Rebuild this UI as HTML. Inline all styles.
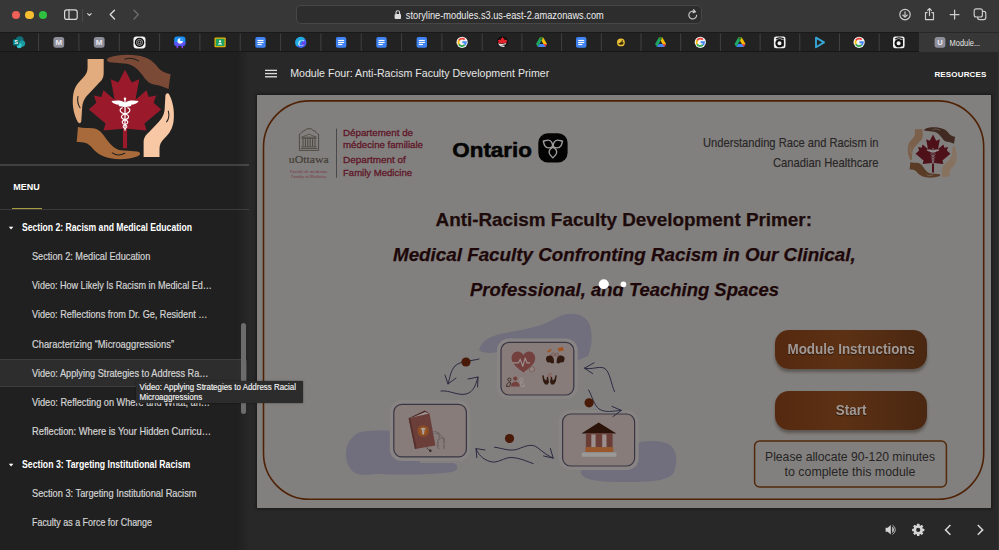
<!DOCTYPE html>
<html lang="en">
<head>
<meta charset="utf-8">
<title>Module Four: Anti-Racism Faculty Development Primer</title>
<style>
*{box-sizing:border-box;margin:0;padding:0}
html,body{width:999px;height:550px;overflow:hidden;background:#282828;font-family:"Liberation Sans",sans-serif;}
.abs{position:absolute}
#toolbar{left:0;top:0;width:999px;height:32px;background:#373737}
#tabbar{left:0;top:32px;width:999px;height:20px;background:#222222;border-top:1px solid #1a1a1a;border-bottom:1px solid #161616}
.tl{width:8.6px;height:8.6px;border-radius:50%;top:10.7px}
#urlbar{left:296px;top:4.8px;width:406px;height:19px;border-radius:5px;background:#2d2d2d;border:1px solid #474747}
#sidebar{left:0;top:52px;width:249px;height:498px;background:#202020;overflow:hidden}
#main{left:249px;top:52px;width:750px;height:498px;background:#282828}
#slide{left:257px;top:95px;width:734px;height:412.5px;background:#82807e;box-shadow:0 0 3px 1px rgba(0,0,0,.4);overflow:hidden}
.btn{left:518px;width:152px;height:38.5px;border-radius:14px;background:linear-gradient(90deg,#55290f 0%,#5c3114 45%,#4a2711 100%);box-shadow:0 2.5px 3px rgba(40,30,25,.42);color:#a09996;text-shadow:0 1px 1px rgba(0,0,0,.5);font-weight:bold;font-size:15px;text-align:center;line-height:38px}
</style>
</head>
<body>
<!-- ===== Safari chrome ===== -->
<div id="toolbar" class="abs">
  <div class="abs tl" style="left:11.9px;background:#ee5f57"></div>
  <div class="abs tl" style="left:25.4px;background:#f5bd2f"></div>
  <div class="abs tl" style="left:38.7px;background:#2fc140"></div>
  <svg class="abs" style="left:60px;top:6px" width="90" height="20" viewBox="0 0 90 20" fill="none" stroke="#d9d9d9" stroke-width="1.2" stroke-linecap="round" stroke-linejoin="round">
    <rect x="4.6" y="3.8" width="12.6" height="9.6" rx="2.2"/><line x1="9" y1="4" x2="9" y2="13.2"/>
    <path d="M27.6 7.6l1.8 1.8 1.8-1.8" stroke-width="1.1"/>
    <path d="M54.5 4.2l-4.3 4.4 4.3 4.4" stroke-width="1.4"/>
    <path d="M74 4.2l4.3 4.4-4.3 4.4" stroke="#6b6b6b" stroke-width="1.4"/>
  </svg>
  <div class="abs" style="left:82px;top:8.5px;width:1px;height:13px;background:#484848"></div>
  <div id="urlbar" class="abs"></div>
  <svg class="abs" style="left:393.2px;top:8.6px" width="10" height="12" viewBox="0 0 10 12"><rect x="1.6" y="5" width="6.4" height="5" rx="1" fill="#dcdcdc"/><path d="M3 5.2V3.6a1.8 1.8 0 013.6 0v1.6" fill="none" stroke="#dcdcdc" stroke-width="1.1"/></svg>
  <svg class="abs" style="left:400px;top:6px" width="210" height="20" viewBox="400 6 210 20"><text x="405.8" y="18.5" font-family="Liberation Sans, sans-serif" font-size="10.2" fill="#ececec" textLength="198" lengthAdjust="spacingAndGlyphs">storyline-modules.s3.us-east-2.amazonaws.com</text></svg>
  <svg class="abs" style="left:686px;top:8px" width="14" height="14" viewBox="0 0 14 14" fill="none" stroke="#cfcfcf" stroke-width="1.1" stroke-linecap="round"><path d="M10.6 7.2a3.9 3.9 0 11-1.6-3.3"/><path d="M7.6 1.6l1.8 2.2-2.4.9" stroke-linejoin="round"/></svg>
  <svg class="abs" style="left:895px;top:5px" width="100" height="20" viewBox="0 0 100 20" fill="none" stroke="#cdcdcd" stroke-width="1.15" stroke-linecap="round" stroke-linejoin="round">
    <circle cx="10" cy="9.6" r="5.2"/><path d="M10 6.8v5.2M7.8 10l2.2 2.2 2.2-2.2"/>
    <path d="M32.2 7.6h-1.7v7h8v-7h-1.7M34.5 10.6V3.6M32.6 5.4l1.9-1.9 1.9 1.9"/>
    <path d="M59.6 5.200v8.800M55.200 9.600h8.800" stroke-width="1.250"/>
    <rect x="79.200" y="3.800" width="8.200" height="8.200" rx="2"/><path d="M82.600 12v.6a2 2 0 002 2h4.200a2 2 0 002-2v-4.200a2 2 0 00-2-2h-1.200"/>
  </svg>
</div>
<div id="tabbar" class="abs"></div>
<div id="tabs"><svg class="abs" style="left:0;top:0" width="999" height="52" viewBox="0 0 999 52">
<rect x="918.9" y="32.5" width="80.4" height="19.5" fill="#373737"/>
<rect x="38.1" y="33.5" width="1" height="17.5" fill="#414141"/><rect x="78.4" y="33.5" width="1" height="17.5" fill="#414141"/><rect x="118.8" y="33.5" width="1" height="17.5" fill="#414141"/><rect x="159.1" y="33.5" width="1" height="17.5" fill="#414141"/><rect x="199.4" y="33.5" width="1" height="17.5" fill="#414141"/><rect x="239.7" y="33.5" width="1" height="17.5" fill="#414141"/><rect x="280.1" y="33.5" width="1" height="17.5" fill="#414141"/><rect x="320.4" y="33.5" width="1" height="17.5" fill="#414141"/><rect x="360.7" y="33.5" width="1" height="17.5" fill="#414141"/><rect x="401.1" y="33.5" width="1" height="17.5" fill="#414141"/><rect x="441.4" y="33.5" width="1" height="17.5" fill="#414141"/><rect x="481.7" y="33.5" width="1" height="17.5" fill="#414141"/><rect x="521.4" y="33.5" width="1" height="17.5" fill="#414141"/><rect x="561.1" y="33.5" width="1" height="17.5" fill="#414141"/><rect x="600.8" y="33.5" width="1" height="17.5" fill="#414141"/><rect x="640.5" y="33.5" width="1" height="17.5" fill="#414141"/><rect x="680.2" y="33.5" width="1" height="17.5" fill="#414141"/><rect x="719.9" y="33.5" width="1" height="17.5" fill="#414141"/><rect x="759.6" y="33.5" width="1" height="17.5" fill="#414141"/><rect x="799.3" y="33.5" width="1" height="17.5" fill="#414141"/><rect x="839.0" y="33.5" width="1" height="17.5" fill="#414141"/><rect x="878.7" y="33.5" width="1" height="17.5" fill="#414141"/>
<circle cx="19.7" cy="40.2" r="3.9" fill="#10707a"/><circle cx="22.1" cy="43.6" r="3.1" fill="#1a9ba1"/><circle cx="19.3" cy="45.8" r="2.5" fill="#37c6d0"/><rect x="12.9" y="39.2" width="6.2" height="6.2" rx="1" fill="#03787c"/><text x="16.0" y="44.4" font-family="Liberation Sans, sans-serif" font-size="5.6" font-weight="bold" fill="#fff" text-anchor="middle">S</text>
<rect x="53.4" y="36.9" width="10.8" height="10.8" rx="2.6" fill="#8e8e9a"/><text x="58.8" y="45.4" font-family="Liberation Sans, sans-serif" font-size="8" font-weight="bold" fill="#e9e9ee" text-anchor="middle">M</text>
<rect x="93.8" y="36.9" width="10.8" height="10.8" rx="2.6" fill="#8e8e9a"/><text x="99.2" y="45.4" font-family="Liberation Sans, sans-serif" font-size="8" font-weight="bold" fill="#e9e9ee" text-anchor="middle">M</text>
<rect x="133.5" y="36.4" width="12" height="12" rx="2.8" fill="#f4f4f4"/><circle cx="139.5" cy="42.4" r="4.7" fill="#0c0c0c"/><circle cx="139.5" cy="42.4" r="3" fill="none" stroke="#d8d8d8" stroke-width=".7"/><circle cx="139.5" cy="42.4" r="1.4" fill="none" stroke="#d8d8d8" stroke-width=".7"/>
<path d="M176.8 44l-.4 4.6 2.2-1.4zM182.8 44l.4 4.6-2.2-1.4z" fill="#8a3ff0"/><rect x="174.20000000000002" y="36.6" width="11.2" height="9.2" rx="2.6" fill="#1a8df2"/><path d="M174.20000000000002 42h11.2v1.2a2.6 2.6 0 01-2.6 2.6h-6a2.6 2.6 0 01-2.6-2.6z" fill="#5b4ff5"/><circle cx="180.20000000000002" cy="41" r="2.7" fill="#f4f7ff"/><path d="M180.20000000000002 41v-2.7a2.7 2.7 0 012.7 2.7z" fill="#1a8df2"/>
<rect x="214.5" y="37.6" width="11.2" height="9.6" rx="1" fill="#f4b400"/><rect x="215.7" y="38.7" width="8.8" height="7.4" fill="#1ea362"/><circle cx="220.1" cy="41.4" r="1.1" fill="#fff"/><path d="M217.9 44.6a2.2 1.6 0 014.4 0z" fill="#fff"/>
<g transform="translate(255.3,37.1)"><rect x="0" y="0" width="10.4" height="10.6" rx="1.8" fill="#3f83f3"/><rect x="2.2" y="2.8" width="6" height="1.15" fill="#fff"/><rect x="2.2" y="4.8" width="6" height="1.15" fill="#fff"/><rect x="2.2" y="6.8" width="4.2" height="1.15" fill="#fff"/></g>
<circle cx="300.8" cy="42.4" r="5.6" fill="#3b6cf0"/><path d="M295.2 42.4a5.6 5.6 0 015.6-5.6 5.6 5.6 0 014 1.7L296.8 46.4a5.6 5.6 0 01-1.6-4z" fill="#19c1d8" opacity=".75"/><path d="M301.8 46.2a5.6 5.6 0 004-3.8l-3 -1z" fill="#7d2ae8" opacity=".8"/><text x="300.8" y="45.6" font-family="Liberation Serif, serif" font-size="9" font-style="italic" fill="#fff" text-anchor="middle">C</text>
<g transform="translate(335.90000000000003,37.1)"><rect x="0" y="0" width="10.4" height="10.6" rx="1.8" fill="#3f83f3"/><rect x="2.2" y="2.8" width="6" height="1.15" fill="#fff"/><rect x="2.2" y="4.8" width="6" height="1.15" fill="#fff"/><rect x="2.2" y="6.8" width="4.2" height="1.15" fill="#fff"/></g>
<g transform="translate(376.3,37.1)"><rect x="0" y="0" width="10.4" height="10.6" rx="1.8" fill="#3f83f3"/><rect x="2.2" y="2.8" width="6" height="1.15" fill="#fff"/><rect x="2.2" y="4.8" width="6" height="1.15" fill="#fff"/><rect x="2.2" y="6.8" width="4.2" height="1.15" fill="#fff"/></g>
<g transform="translate(416.6,37.1)"><rect x="0" y="0" width="10.4" height="10.6" rx="1.8" fill="#3f83f3"/><rect x="2.2" y="2.8" width="6" height="1.15" fill="#fff"/><rect x="2.2" y="4.8" width="6" height="1.15" fill="#fff"/><rect x="2.2" y="6.8" width="4.2" height="1.15" fill="#fff"/></g>
<g transform="translate(462.1,42.3)" fill="none" stroke-width="1.9"><circle r="5.6" fill="#f4f4f4" stroke="none"/><path d="M2.6 -2.6A3.7 3.7 0 00-3.2 -1.85" stroke="#ea4335"/><path d="M-3.2 -1.85A3.7 3.7 0 00-3.2 1.85" stroke="#fbbc05"/><path d="M-3.2 1.85A3.7 3.7 0 002.6 2.6" stroke="#34a853"/><path d="M2.6 2.6A3.7 3.7 0 003.7 0H0.3" stroke="#4285f4"/></g>
<circle cx="502.5" cy="41.700" r="5.200" fill="#070707"/><path d="M502.5 36.800l.9 1.700 1-.5-.3 2.200 1.300-1 .3.900 1.500-.2-.7 1.600.6.500-1.600 1.500h-6l-1.600-1.500.6-.5-.7-1.600 1.500.2.300-.9 1.300 1-.3-2.200 1 .5z" fill="#e0222a"/><path d="M497.9 43.200c2.400 1 5.400 1 8.400-.2l-.6 1.600c-2.400.6-4.600.6-6.400.2l5.600 1-.6 1.200c-2.800.2-5-1-6.400-3.800z" fill="#e2e2e2"/>
<g transform="translate(536.0,37.6)"><path d="M3.7 0h3.6l3.7 6.3H7.4z" fill="#fbbc05"/><path d="M3.7 0L0 6.3l1.8 3.1L5.5 3.1z" fill="#1fa463"/><path d="M1.8 9.4h7.4l1.8-3.1H3.6z" fill="#4285f4"/><path d="M7.3 0H3.7l1.8 3.1z" fill="#188038"/><path d="M11 6.3H7.4l1.8 3.1z" fill="#ea4335"/></g>
<g transform="translate(576.0,37.1)"><rect x="0" y="0" width="10.4" height="10.6" rx="1.8" fill="#3f83f3"/><rect x="2.2" y="2.8" width="6" height="1.15" fill="#fff"/><rect x="2.2" y="4.8" width="6" height="1.15" fill="#fff"/><rect x="2.2" y="6.8" width="4.2" height="1.15" fill="#fff"/></g>
<circle cx="620.9" cy="42.4" r="3.9" fill="#e9c033"/><path d="M618.3 43a2.6 2 0 005.2-.6l-2.2-.8-1.4 1.4z" fill="#3a2a10"/><circle cx="622.3" cy="41" r=".7" fill="#3a2a10"/>
<g transform="translate(655.1,37.6)"><path d="M3.7 0h3.6l3.7 6.3H7.4z" fill="#fbbc05"/><path d="M3.7 0L0 6.3l1.8 3.1L5.5 3.1z" fill="#1fa463"/><path d="M1.8 9.4h7.4l1.8-3.1H3.6z" fill="#4285f4"/><path d="M7.3 0H3.7l1.8 3.1z" fill="#188038"/><path d="M11 6.3H7.4l1.8 3.1z" fill="#ea4335"/></g>
<g transform="translate(700.3,42.3)" fill="none" stroke-width="1.9"><circle r="5.6" fill="#f4f4f4" stroke="none"/><path d="M2.6 -2.6A3.7 3.7 0 00-3.2 -1.85" stroke="#ea4335"/><path d="M-3.2 -1.85A3.7 3.7 0 00-3.2 1.85" stroke="#fbbc05"/><path d="M-3.2 1.85A3.7 3.7 0 002.6 2.6" stroke="#34a853"/><path d="M2.6 2.6A3.7 3.7 0 003.7 0H0.3" stroke="#4285f4"/></g>
<g transform="translate(734.5,37.6)"><path d="M3.7 0h3.6l3.7 6.3H7.4z" fill="#fbbc05"/><path d="M3.7 0L0 6.3l1.8 3.1L5.5 3.1z" fill="#1fa463"/><path d="M1.8 9.4h7.4l1.8-3.1H3.6z" fill="#4285f4"/><path d="M7.3 0H3.7l1.8 3.1z" fill="#188038"/><path d="M11 6.3H7.4l1.8 3.1z" fill="#ea4335"/></g>
<rect x="773.9000000000001" y="36.6" width="11.6" height="11.6" rx="2.2" fill="#f2f2f2"/><circle cx="779.5" cy="43.2" r="3.1" fill="none" stroke="#111" stroke-width="2.1"/><rect x="781.9000000000001" y="39.6" width="1.9" height="6.8" fill="#111"/><path d="M776.1 39.2a4 2 0 017.6 0" fill="none" stroke="#111" stroke-width="1.3"/>
<path d="M816.0 37.6l8 4.8-8 4.8z" fill="none" stroke="#35a6d6" stroke-width="1.9" stroke-linejoin="round"/>
<g transform="translate(859.1,42.3)" fill="none" stroke-width="1.9"><circle r="5.6" fill="#f4f4f4" stroke="none"/><path d="M2.6 -2.6A3.7 3.7 0 00-3.2 -1.85" stroke="#ea4335"/><path d="M-3.2 -1.85A3.7 3.7 0 00-3.2 1.85" stroke="#fbbc05"/><path d="M-3.2 1.85A3.7 3.7 0 002.6 2.6" stroke="#34a853"/><path d="M2.6 2.6A3.7 3.7 0 003.7 0H0.3" stroke="#4285f4"/></g>
<rect x="893.0" y="36.6" width="11.6" height="11.6" rx="2.2" fill="#f2f2f2"/><circle cx="898.5999999999999" cy="43.2" r="3.1" fill="none" stroke="#111" stroke-width="2.1"/><rect x="901.0" y="39.6" width="1.9" height="6.8" fill="#111"/><path d="M895.1999999999999 39.2a4 2 0 017.6 0" fill="none" stroke="#111" stroke-width="1.3"/>
<rect x="934.6" y="36.9" width="10.8" height="10.8" rx="2.6" fill="#8e8e9a"/><text x="940" y="45.4" font-family="Liberation Sans, sans-serif" font-size="7.6" font-weight="bold" fill="#e9e9ee" text-anchor="middle">U</text>
<text x="949.6" y="45.6" font-family="Liberation Sans, sans-serif" font-size="8.6" fill="#e4e4e4" textLength="30.6" lengthAdjust="spacingAndGlyphs">Module...</text>
</svg></div>

<!-- ===== Sidebar ===== -->
<div id="sidebar" class="abs">
  <svg class="abs" style="left:65px;top:-2px;color:#202020" width="115" height="115" viewBox="0 0 550 550">
  <!-- top-left hand -->
  <path d="M108 43H185V108C185 135 176 146 160 160L112 212C92 232 84 250 82 278L78 340C77 352 66 354 60 342C44 312 34 270 38 225C42 180 60 160 82 138C100 120 108 105 108 85Z" fill="#e3ac7e"/>
  <path d="M62 222C58 245 62 262 72 276" fill="none" stroke="currentColor" stroke-width="5" stroke-linecap="round"/>
  <!-- top-right hand -->
  <path d="M505 116L495 186C470 176 452 168 430 166C405 163 392 150 376 128C356 100 330 72 296 66L214 58C198 56 196 42 212 36C250 22 300 20 345 26C392 32 420 50 440 78C452 96 470 108 505 116Z" fill="#7a4a36"/>
  <path d="M286 44C310 36 334 40 352 52" fill="none" stroke="currentColor" stroke-width="5" stroke-linecap="round"/>
  <!-- right hand -->
  <path d="M452 512H376V446C376 420 384 408 400 394L448 344C468 322 476 304 477 276L480 220C481 206 494 202 500 216C516 246 524 290 520 334C516 378 498 400 478 420C460 438 452 452 452 472Z" fill="#f7c8a3"/>
  <path d="M494 292C500 312 496 330 486 344" fill="none" stroke="currentColor" stroke-width="5" stroke-linecap="round"/>
  <!-- bottom-left hand -->
  <path d="M56 440L62 368C88 374 110 372 132 374C158 377 172 390 188 412C208 440 232 474 268 480L344 486C362 488 364 502 348 508C310 522 262 526 218 518C172 510 146 490 124 462C110 445 92 440 56 440Z" fill="#a96a3b"/>
  <path d="M226 492C246 506 268 504 286 494" fill="none" stroke="currentColor" stroke-width="5" stroke-linecap="round"/>
  <!-- maple leaf -->
  <path d="M287 95L319 155L355 140L337 238L390 193L400 225L436 218L424 252L460 285L380 352L390 385L297 377V470H277V377L184 385L194 352L114 285L150 252L138 218L174 225L184 193L237 238L219 140L255 155Z" fill="#9a1a2b"/>
  <!-- caduceus -->
  <g fill="#ffffff" stroke="none">
    <circle cx="287" cy="233" r="6"/>
    <rect x="284" y="236" width="6" height="150"/>
    <path d="M287 252C300 240 330 240 352 244C346 256 330 262 316 262C320 266 314 272 300 270C296 274 290 274 287 270C284 274 278 274 274 270C260 272 254 266 258 262C244 262 228 256 222 244C244 240 274 240 287 252Z"/>
  </g>
  <g fill="none" stroke="#ffffff" stroke-width="5" stroke-linecap="round">
    <path d="M300 276C318 284 312 300 287 306C266 312 262 326 287 334C306 340 304 352 287 358C274 362 276 372 287 376"/>
    <path d="M274 276C256 284 262 300 287 306C308 312 312 326 287 334C268 340 270 352 287 358C300 362 298 372 287 376"/>
  </g>
</svg>
  <div class="abs" style="left:0;top:112px;width:249px;height:1.5px;background:#414141"></div>
  <div class="abs" style="left:0;top:157px;width:249px;height:1px;background:#3a3a3a"></div>
  <div class="abs" style="left:12px;top:155.5px;width:29.7px;height:1.5px;background:#a59a3c"></div>
  <div class="abs" style="left:0;top:307px;width:247px;height:28px;background:#2d2d2d;border:1px solid #3d3d3d;border-left:none;border-radius:0 3px 3px 0"></div>
  <svg class="abs" style="left:7px;top:173px" width="8" height="6" viewBox="0 0 8 6"><path d="M2.3 1.9h3.600L4.1 4.200z" fill="#fff" stroke="#fff" stroke-width=".5" stroke-linejoin="round"/></svg>
  <svg class="abs" style="left:7px;top:409.5px" width="8" height="6" viewBox="0 0 8 6"><path d="M2.3 1.9h3.600L4.1 4.200z" fill="#fff" stroke="#fff" stroke-width=".5" stroke-linejoin="round"/></svg>
  <svg class="abs" style="left:0;top:0" width="249" height="498" viewBox="0 52 249 498" font-family="Liberation Sans, sans-serif" font-size="10.3">
    <text x="13.3" y="190" font-size="9.3" font-weight="bold" fill="#ffffff" textLength="26.4" lengthAdjust="spacingAndGlyphs">MENU</text>
    <text x="22" y="231" font-weight="bold" fill="#ffffff" textLength="170" lengthAdjust="spacingAndGlyphs">Section 2: Racism and Medical Education</text>
    <text x="32" y="259.5" fill="#d4d4d4" stroke="#d4d4d4" stroke-width=".2" textLength="118.3" lengthAdjust="spacingAndGlyphs">Section 2: Medical Education</text>
    <text x="32" y="289" fill="#d4d4d4" stroke="#d4d4d4" stroke-width=".2" textLength="179.8" lengthAdjust="spacingAndGlyphs">Video: How Likely Is Racism in Medical Ed…</text>
    <text x="32" y="318" fill="#d4d4d4" stroke="#d4d4d4" stroke-width=".2" textLength="175.4" lengthAdjust="spacingAndGlyphs">Video: Reflections from Dr. Ge, Resident …</text>
    <text x="32" y="347.5" fill="#d4d4d4" stroke="#d4d4d4" stroke-width=".2" textLength="142" lengthAdjust="spacingAndGlyphs">Characterizing “Microaggressions”</text>
    <text x="32" y="376.5" fill="#d4d4d4" stroke="#d4d4d4" stroke-width=".2" textLength="176.5" lengthAdjust="spacingAndGlyphs">Video: Applying Strategies to Address Ra…</text>
    <text x="32" y="405.5" fill="#d4d4d4" stroke="#d4d4d4" stroke-width=".2" textLength="178" lengthAdjust="spacingAndGlyphs">Video: Reflecting on Where and What, an…</text>
    <text x="32" y="435" fill="#d4d4d4" stroke="#d4d4d4" stroke-width=".2" textLength="179" lengthAdjust="spacingAndGlyphs">Reflection: Where is Your Hidden Curricu…</text>
    <text x="22" y="467.5" font-weight="bold" fill="#ffffff" textLength="168.3" lengthAdjust="spacingAndGlyphs">Section 3: Targeting Institutional Racism</text>
    <text x="32" y="496.5" fill="#d4d4d4" stroke="#d4d4d4" stroke-width=".2" textLength="164.5" lengthAdjust="spacingAndGlyphs">Section 3: Targeting Institutional Racism</text>
    <text x="32" y="525.5" fill="#d4d4d4" stroke="#d4d4d4" stroke-width=".2" textLength="120" lengthAdjust="spacingAndGlyphs">Faculty as a Force for Change</text>
  </svg>
  <div class="abs" style="left:237px;top:0;width:12px;height:498px;background:linear-gradient(90deg,rgba(255,255,255,0),rgba(255,255,255,.035))"></div>
  <div class="abs" style="left:241px;top:271px;width:5px;height:90.5px;border-radius:3px;background:#6c6c6c"></div>
</div>
<div id="main" class="abs">
  <svg class="abs" style="left:0;top:0" width="750" height="498" viewBox="249 52 750 498" font-family="Liberation Sans, sans-serif">
    <g fill="#dcdcdc"><rect x="265" y="69.7" width="12" height="1.35"/><rect x="265" y="72.9" width="12" height="1.35"/><rect x="265" y="76.1" width="12" height="1.35"/></g>
    <text x="290.2" y="76.9" font-size="11.2" fill="#e6e6e6" textLength="259" lengthAdjust="spacingAndGlyphs">Module Four: Anti-Racism Faculty Development Primer</text>
    <text x="934.4" y="76.7" font-size="8" font-weight="bold" fill="#ffffff" textLength="52" lengthAdjust="spacing">RESOURCES</text>
    <!-- bottom controls -->
    <g transform="translate(891,529.8)" fill="#d6d6d6">
      <path d="M-5.4 -2h2.100l3.100 -2.700v9.400l-3.100 -2.700h-2.100z"/>
      <path d="M1.100 -3.200a3.600 3.600 0 010 6.400z" fill="#bdbdbd"/>
      <path d="M1.600 -4.600a5.300 5.300 0 010 9.200" fill="none" stroke="#c4c4c4" stroke-width=".9"/>
    </g>
    <g transform="translate(918.2,529.9)">
      <g fill="#d6d6d6">
        <rect x="-1.25" y="-6.100" width="2.500" height="12.200" rx=".5"/>
        <rect x="-1.25" y="-6.100" width="2.500" height="12.200" rx=".5" transform="rotate(45)"/>
        <rect x="-1.25" y="-6.100" width="2.500" height="12.200" rx=".5" transform="rotate(90)"/>
        <rect x="-1.25" y="-6.100" width="2.500" height="12.200" rx=".5" transform="rotate(135)"/>
        <circle r="4.700"/>
      </g>
      <circle r="2.100" fill="#282828"/>
    </g>
    <path d="M950.400 525l-4.900 4.900 4.900 4.900" fill="none" stroke="#d6d6d6" stroke-width="1.500"/>
    <path d="M977.800 525l4.900 4.900-4.900 4.900" fill="none" stroke="#d6d6d6" stroke-width="1.500"/>
  </svg>
</div>

<div class="abs" style="left:997.8px;top:52px;width:1.2px;height:498px;background:#323232"></div>
<div id="slide" class="abs">
  <svg class="abs" style="left:0;top:0" width="734" height="413" viewBox="257 95 734 413" font-family="Liberation Sans, sans-serif">
    <rect x="263.5" y="100.9" width="720.2" height="398.4" rx="46" fill="none" stroke="#4f2206" stroke-width="1.6"/>
    <!-- uOttawa logo -->
    <g fill="none" stroke="#4b443c" stroke-width=".9">
      <path d="M299.4 150.4V134.2C301 133.6 302.2 132.6 302.6 131.2C304.4 130.8 306 129.8 306.8 128.8H311.2C312 129.8 313.6 130.8 315.4 131.2C315.8 132.6 317 133.6 318.6 134.2V150.4Z"/>
      <path d="M301.6 137.2L309 134.2L316.4 137.2Z" stroke-width=".7"/>
      <path d="M301.6 138.4H316.4" stroke-width=".9"/>
      <path d="M303 139.2V146M305.4 139.2V146M307.8 139.2V146M310.2 139.2V146M312.6 139.2V146M315 139.2V146" stroke-width="1"/>
      <path d="M301.4 146.8H316.6M300.8 148.4H317.2" stroke-width=".9"/>
    </g>
    <text x="288.8" y="163" font-family="Liberation Serif, serif" font-size="11" fill="#443e38" stroke="#443e38" stroke-width=".2" textLength="39.8" lengthAdjust="spacingAndGlyphs">uOttawa</text>
    <text x="290" y="173" font-family="Liberation Serif, serif" font-size="4.3" fill="#7a3342" textLength="37.6" lengthAdjust="spacingAndGlyphs">Faculté de médecine</text>
    <text x="291" y="177.8" font-family="Liberation Serif, serif" font-size="4.3" fill="#7a3342" textLength="35.6" lengthAdjust="spacingAndGlyphs">Faculty of Medicine</text>
    <rect x="336" y="128.6" width=".9" height="49.2" fill="#454242"/>
    <g font-size="9.7" fill="#5f1628" stroke="#5f1628" stroke-width=".3">
      <text x="343" y="135.8" textLength="70" lengthAdjust="spacingAndGlyphs">Département de</text>
      <text x="343" y="148.3" textLength="80" lengthAdjust="spacingAndGlyphs">médecine familiale</text>
      <text x="343" y="162.7" textLength="62.7" lengthAdjust="spacingAndGlyphs">Department of</text>
      <text x="343" y="175.5" textLength="69" lengthAdjust="spacingAndGlyphs">Family Medicine</text>
    </g>
    <!-- Ontario -->
    <text x="452.3" y="156.8" font-size="20.4" font-weight="bold" fill="#050505" stroke="#050505" stroke-width=".55" textLength="79.6" lengthAdjust="spacingAndGlyphs">Ontario</text>
    <rect x="538.3" y="133.2" width="29.3" height="29.3" rx="9.5" fill="#030303"/>
    <g transform="translate(552.9,146.7)" fill="none" stroke="#a09d9c" stroke-width="1.350" stroke-linejoin="round">
      <path d="M0 .6C-2.800 1.500-4.700 4.400-3.300 7.300C-2.400 9-.8 10.100 0 11.200C.8 10.100 2.400 9 3.300 7.300C4.700 4.400 2.800 1.500 0 .6Z"/>
      <path d="M0 .6C-2.800 1.500-4.700 4.400-3.300 7.300C-2.400 9-.8 10.100 0 11.200C.8 10.100 2.400 9 3.300 7.300C4.700 4.400 2.800 1.500 0 .6Z" transform="rotate(120)"/>
      <path d="M0 .6C-2.800 1.500-4.700 4.400-3.300 7.300C-2.400 9-.8 10.100 0 11.200C.8 10.100 2.400 9 3.300 7.300C4.700 4.400 2.800 1.500 0 .6Z" transform="rotate(-120)"/>
    </g>
    <!-- right header -->
    <g font-size="12.2" fill="#282626" stroke="#282626" stroke-width=".15">
      <text x="703" y="146.7" textLength="175.5" lengthAdjust="spacingAndGlyphs">Understanding Race and Racism in</text>
      <text x="773" y="166.6" textLength="105.5" lengthAdjust="spacingAndGlyphs">Canadian Healthcare</text>
    </g>
    <!-- titles -->
    <text x="435.5" y="226.3" font-size="19" font-weight="bold" fill="#1d0b0b" stroke="#1d0b0b" stroke-width=".25" textLength="376.5" lengthAdjust="spacingAndGlyphs">Anti-Racism Faculty Development Primer:</text>
    <text x="393" y="261.3" font-size="19" font-weight="bold" font-style="italic" fill="#1d0709" stroke="#1d0709" stroke-width=".25" textLength="462.7" lengthAdjust="spacingAndGlyphs">Medical Faculty Confronting Racism in Our Clinical,</text>
    <text x="470" y="296.3" font-size="19" font-weight="bold" font-style="italic" fill="#1d0709" stroke="#1d0709" stroke-width=".25" textLength="309" lengthAdjust="spacingAndGlyphs">Professional, and Teaching Spaces</text>
    <circle cx="603.8" cy="284.2" r="5" fill="#ffffff"/>
    <circle cx="623.4" cy="284.3" r="2.9" fill="#ffffff"/>
    <!--ILLUSTRATION-->
    <!-- blobs -->
    <g fill="#716f7d">
      <path d="M479 350C481 342 488 337 500 334C520 330 540 328 556 318C566 312 580 312 587 320C593 328 593 345 588 356L574 362H500V352C492 353 484 354 479 350Z"/>
      <path d="M360 432C376 429 400 431 420 432V463H452C459 463 459 471 452 472C430 475 400 475 380 474C366 474 356 478 350 468C342 456 346 438 360 432Z"/>
      <path d="M640 442C650 440 664 441 670 445C677 450 678 462 674 472C670 481 650 482 630 482C612 482 594 482 586 478C580 475 579 470 584 466H637V446Z"/>
    </g>
    <!-- cards -->
    <g fill="#877c7a" stroke="#888483" stroke-width="8" stroke-linejoin="round">
      <rect x="501" y="342.4" width="72.8" height="52.6" rx="8"/>
      <rect x="393.8" y="404.3" width="72.6" height="52.6" rx="8"/>
      <rect x="562.6" y="414" width="72" height="52" rx="8"/>
    </g>
    <g fill="#877c7a" stroke="#383644" stroke-width="1.200">
      <rect x="501" y="342.4" width="72.8" height="52.6" rx="8"/>
      <rect x="393.8" y="404.3" width="72.6" height="52.6" rx="8"/>
      <rect x="562.6" y="414" width="72" height="52" rx="8"/>
    </g>
    <!-- arrows -->
    <g fill="none" stroke="#2b2a41" stroke-width="1" stroke-linecap="round" stroke-linejoin="round">
      <path d="M479 359C472 361 460 361 455 366C450 372 450 378 448 384M445 375L448 384L456 378"/>
      <path d="M441 391C450 390 458 396 466 394C474 392 476 384 478 377M468 379L478 377L477.6 387"/>
      <path d="M584.5 368.2C592 370 598 366 604 368C610 371 611 384 614.5 391.5M594 362.8L584.5 368.2L592.6 373.6"/>
      <path d="M588.6 390C592 396 594 405 599 409C605 413 613 411 621.3 410.4M612 406.4L621.3 410.4L613 416.6"/>
      <path d="M494.5 447.2C502 448 510 452 518 449C526 446 532 443 538 448C543 452 548 456 553.2 458.1M550.4 448.6L553.2 458.1L543.6 456"/>
      <path d="M476 448.6C478 454 482 459 490 461.5C498 464 504 457 512 457.5C520 458 526 461 533.2 463.6M485 450L476 448.6L476.8 457.6"/>
    </g>
    <g fill="#491a08">
      <circle cx="466" cy="362" r="4.6"/><circle cx="589.1" cy="402.8" r="4.6"/><circle cx="509.5" cy="438.5" r="4.6"/>
    </g>
    <!-- top card icons -->
    <path d="M523.4 372.4C517.6 368 511.6 363.6 511.6 358.2C511.6 354.4 514.4 351.6 517.6 351.6C520 351.6 522.2 353 523.4 355.2C524.6 353 526.8 351.600 529.200 351.600C532.400 351.600 535.200 354.400 535.200 358.200C535.200 363.600 529.200 368 523.400 372.400Z" fill="#74403e"/>
    <path d="M512.4 362.800H518.600L520.200 359.200L522.800 366.300L525.200 358L526.900 362.800H530" fill="none" stroke="#9a8e8c" stroke-width="1.150" stroke-linejoin="round"/>
    <path d="M530.9 367.200a1.300 1.300 0 012.200 0a1.300 1.300 0 011.100 2.100a1.300 1.300 0 01-1.100 2.100a1.300 1.300 0 01-2.200 0a1.300 1.300 0 01-1.100-2.100a1.300 1.300 0 011.100-2.100z" fill="#90837f" stroke="#6a4038" stroke-width=".5"/>
    <g fill="#331a10">
      <path d="M546.200 357.200c1.200-1.400 3-2.200 4.600-1.600 1.600.6 2.600 2.200 3 3.800l.2 3.600-2.200.6-1.400-1-3.200-.4-1.200-2.400z"/>
      <path d="M564.400 357.200c-1.200-1.400-3-2.200-4.600-1.600-1.600.6-2.600 2.200-3 3.800l-.2 3.600 2.200.6 1.400-1 3.200-.4 1.200-2.400z"/>
      <path d="M542.200 375.600l1.300-.3 1 4 1.900 1.300 .5-3.600 1.200 .1 .9 4.800-1.300 2.500-2.700.1-1.900-3.300z"/>
      <path d="M556.800 375.600l-1.300-.3-1 4-1.900 1.300-.5-3.600-1.200 .1-.9 4.800 1.300 2.500 2.700.1 1.900-3.300z"/>
    </g>
    <g fill="none" stroke="#7b4b45" stroke-width=".7"><circle cx="553" cy="354.600" r="1.600"/><circle cx="557" cy="354.600" r="1.600"/></g>
    <g fill="#a2521c"><path d="M547 352.600c.4-2 2.200-3.600 4.600-3.800-.2 2.200-2 3.800-4.600 3.800z"/><path d="M557.600 348.200l5.200-1.300 1 3.700-4.600 1z"/></g>
    <g fill="#8a4a40"><circle cx="548.400" cy="376" r=".8"/><circle cx="550.600" cy="376.400" r=".8"/><circle cx="549.500" cy="374" r=".8"/><circle cx="551.200" cy="373.800" r=".6"/></g>
    <g>
      <circle cx="509.400" cy="379.600" r="1.600" fill="none" stroke="#331a10" stroke-width=".75"/>
      <path d="M506.400 386.400c.3-2.600 1.300-3.900 3.400-3.900l1 .3-1.200 3.600z" fill="none" stroke="#331a10" stroke-width=".75"/>
      <circle cx="521.300" cy="379.600" r="1.600" fill="none" stroke="#a59a98" stroke-width=".75"/>
      <path d="M524.500 386.400c-.3-2.600-1.300-3.900-3.400-3.900l-1 .3 1.200 3.600z" fill="none" stroke="#a59a98" stroke-width=".75"/>
      <circle cx="515.300" cy="378.600" r="2.100" fill="#74403e"/>
      <path d="M510.800 386.600c.4-3.400 1.800-4.800 4.500-4.800s4.100 1.400 4.500 4.800z" fill="#74403e"/>
    </g>
    <!-- book card -->
    <path d="M408.600 418.200L424.800 410.600L429.500 413.600Z" fill="#4c2622"/>
    <path d="M410 418.400L425.200 412L429.200 413.800Z" fill="#9c9593"/>
    <path d="M408.600 418.200L429.500 413.600L435.400 445.500L415 449.100Z" fill="#6b3e3a"/>
    <path d="M408.600 418.200L410.300 417.800L416.700 448.800L415 449.100Z" fill="#55302c"/>
    <circle cx="423.200" cy="430.900" r="5.700" fill="#9a5622"/>
    <circle cx="423.200" cy="430.900" r="4.500" fill="none" stroke="#5e3424" stroke-width=".5"/>
    <path d="M420.300 428.400c1.800-.7 4-.7 5.800 0l-1.500 1.200-.6 4.800h-1.600l-.6-4.800z" fill="#aaa19d"/>
    <g fill="none" stroke="#4a4140" stroke-width="1.500" stroke-linecap="round">
      <path d="M433 432.700C436.200 431.400 439.400 433.200 440.900 437.400"/>
      <path d="M438.600 448.300C437.400 445 437.600 440 439.600 438.200C441 437 443 437.400 443.800 439.400C444.800 442 444.400 445.600 443.600 448.300"/>
      <path d="M426.800 447.800C427.600 449 428.800 450 430 450.500" stroke-width="1"/>
    </g>
    <g fill="none" stroke="#a49c9a" stroke-width=".7" stroke-linecap="round">
      <path d="M433 432.700C436.200 431.400 439.400 433.200 440.900 437.400"/>
      <path d="M438.600 448.300C437.400 445 437.600 440 439.600 438.200C441 437 443 437.400 443.800 439.400C444.800 442 444.400 445.600 443.600 448.300"/>
    </g>
    <circle cx="430.300" cy="450.700" r="1.250" fill="#2e2828"/>
    <!-- building card -->
    <path d="M581.400 433.400L598.700 422.500L616.400 433.400Z" fill="#2c1309"/>
    <rect x="585.900" y="433.400" width="26.700" height="14" fill="#6b3d37"/>
    <rect x="591.300" y="434.400" width="4.300" height="12.800" fill="#9a8f8c"/>
    <rect x="602.200" y="434.400" width="4.300" height="12.800" fill="#9a8f8c"/>
    <rect x="585.400" y="447.200" width="27.800" height="4.800" fill="#98582c"/>
    <rect x="581.800" y="452.400" width="34.600" height="4.400" rx=".8" fill="#9b9997"/>
    <!--/ILLUSTRATION-->
    <!-- notice -->
    <rect x="754.6" y="441" width="191.8" height="46" rx="5" fill="none" stroke="#54280a" stroke-width="1.500"/>
    <g font-size="12.6" fill="#262424" text-anchor="middle">
      <text x="850" y="461" textLength="170" lengthAdjust="spacingAndGlyphs">Please allocate 90-120 minutes</text>
      <text x="850" y="476" textLength="131" lengthAdjust="spacingAndGlyphs">to complete this module</text>
    </g>
  </svg>
  <div class="abs btn" style="top:235px"><span style="display:inline-block;transform:scaleX(.895)">Module Instructions</span></div>
  <div class="abs btn" style="top:296px"><span style="display:inline-block;transform:scaleX(.895)">Start</span></div>
  <svg class="abs" style="left:647.3px;top:30px;color:#e8e4e1;filter:brightness(.56) saturate(.85)" width="55.6" height="55.6" viewBox="0 0 550 550">
  <!-- top-left hand -->
  <path d="M108 43H185V108C185 135 176 146 160 160L112 212C92 232 84 250 82 278L78 340C77 352 66 354 60 342C44 312 34 270 38 225C42 180 60 160 82 138C100 120 108 105 108 85Z" fill="#e3ac7e"/>
  <path d="M62 222C58 245 62 262 72 276" fill="none" stroke="currentColor" stroke-width="5" stroke-linecap="round"/>
  <!-- top-right hand -->
  <path d="M505 116L495 186C470 176 452 168 430 166C405 163 392 150 376 128C356 100 330 72 296 66L214 58C198 56 196 42 212 36C250 22 300 20 345 26C392 32 420 50 440 78C452 96 470 108 505 116Z" fill="#7a4a36"/>
  <path d="M286 44C310 36 334 40 352 52" fill="none" stroke="currentColor" stroke-width="5" stroke-linecap="round"/>
  <!-- right hand -->
  <path d="M452 512H376V446C376 420 384 408 400 394L448 344C468 322 476 304 477 276L480 220C481 206 494 202 500 216C516 246 524 290 520 334C516 378 498 400 478 420C460 438 452 452 452 472Z" fill="#f7c8a3"/>
  <path d="M494 292C500 312 496 330 486 344" fill="none" stroke="currentColor" stroke-width="5" stroke-linecap="round"/>
  <!-- bottom-left hand -->
  <path d="M56 440L62 368C88 374 110 372 132 374C158 377 172 390 188 412C208 440 232 474 268 480L344 486C362 488 364 502 348 508C310 522 262 526 218 518C172 510 146 490 124 462C110 445 92 440 56 440Z" fill="#a96a3b"/>
  <path d="M226 492C246 506 268 504 286 494" fill="none" stroke="currentColor" stroke-width="5" stroke-linecap="round"/>
  <!-- maple leaf -->
  <path d="M287 95L319 155L355 140L337 238L390 193L400 225L436 218L424 252L460 285L380 352L390 385L297 377V470H277V377L184 385L194 352L114 285L150 252L138 218L174 225L184 193L237 238L219 140L255 155Z" fill="#9a1a2b"/>
  <!-- caduceus -->
  <g fill="#ffffff" stroke="none">
    <circle cx="287" cy="233" r="6"/>
    <rect x="284" y="236" width="6" height="150"/>
    <path d="M287 252C300 240 330 240 352 244C346 256 330 262 316 262C320 266 314 272 300 270C296 274 290 274 287 270C284 274 278 274 274 270C260 272 254 266 258 262C244 262 228 256 222 244C244 240 274 240 287 252Z"/>
  </g>
  <g fill="none" stroke="#ffffff" stroke-width="5" stroke-linecap="round">
    <path d="M300 276C318 284 312 300 287 306C266 312 262 326 287 334C306 340 304 352 287 358C274 362 276 372 287 376"/>
    <path d="M274 276C256 284 262 300 287 306C308 312 312 326 287 334C268 340 270 352 287 358C300 362 298 372 287 376"/>
  </g>
</svg>
</div>
<div class="abs" style="left:136px;top:381px;width:167px;height:21.5px;background:#2c2c2c;box-shadow:0 0 2px rgba(0,0,0,.4)"></div>
<svg class="abs" style="left:136px;top:381px" width="167" height="22" viewBox="136 381 167 22" font-family="Liberation Sans, sans-serif" font-size="8.800" fill="#f4f4f4" stroke="#f4f4f4" stroke-width=".15">
  <text x="139.600" y="390.300" textLength="156.400" lengthAdjust="spacingAndGlyphs">Video: Applying Strategies to Address Racial</text>
  <text x="139.600" y="399.700" textLength="62.600" lengthAdjust="spacingAndGlyphs">Microaggressions</text>
</svg>
</body>
</html>
